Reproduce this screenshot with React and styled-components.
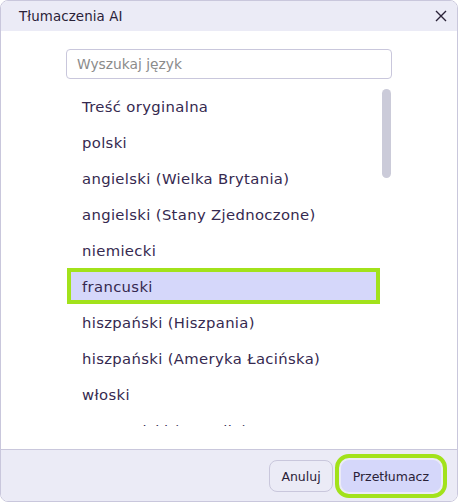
import styled, { createGlobalStyle } from "styled-components";

const GlobalStyle = createGlobalStyle`
  html, body { margin: 0; padding: 0; background: #ffffff; }
  body { font-family: "DejaVu Sans", "Open Sans", sans-serif; }
`;

const Dialog = styled.div`
  box-sizing: border-box;
  width: 458px;
  height: 502px;
  border: 1px solid #c9c7dc;
  border-radius: 8px;
  overflow: hidden;
  display: flex;
  flex-direction: column;
  background: #ffffff;
`;

const Header = styled.div`
  height: 30px;
  background: #ebebf6;
  display: flex;
  align-items: center;
  justify-content: space-between;
  padding: 0 9px 0 18px;
  flex-shrink: 0;
`;

const Title = styled.div`
  font-size: 13.4px;
  letter-spacing: 0.1px;
  color: #2a2238;
`;

const CloseButton = styled.button`
  border: 0;
  background: none;
  padding: 0;
  width: 14px;
  height: 14px;
  display: flex;
  cursor: pointer;
`;

const Body = styled.div`
  flex: 1;
  padding: 18px 65px 0 65px;
  border-bottom: 1px solid #c9c7dc;
  display: flex;
  flex-direction: column;
`;

const Search = styled.input`
  box-sizing: border-box;
  width: 326px;
  height: 30px;
  border: 1px solid #c9c7dc;
  border-radius: 4px;
  padding: 0 10px;
  font-family: inherit;
  font-size: 13.8px;
  color: #333;
  outline: none;
  &::placeholder { color: #8b8b8b; }
`;

const ListArea = styled.div`
  margin-top: 9px;
  height: 338px;
  display: flex;
  gap: 2px;
  overflow: hidden;
`;

const List = styled.ul`
  list-style: none;
  margin: 0;
  padding: 0 0 0 1px;
  width: 313px;
`;

const Item = styled.li`
  box-sizing: border-box;
  height: 36px;
  display: flex;
  align-items: center;
  padding-left: ${(p) => (p.$active ? 11 : 15)}px;
  padding-top: 1px;
  font-size: 14.8px;
  letter-spacing: 0.35px;
  color: #35294f;
  background: ${(p) => (p.$active ? "#d5d7fa" : "transparent")};
  border: ${(p) => (p.$active ? "4px solid #a2e21b" : "0")};
`;

const Scrollbar = styled.div`
  width: 9px;
  height: 89px;
  margin-top: 1px;
  border-radius: 5px;
  background: #cbcbd9;
`;

const Footer = styled.div`
  height: 51px;
  background: #ebebf6;
  display: flex;
  align-items: center;
  justify-content: flex-end;
  gap: 8px;
  padding: 0 16px 0 0;
  flex-shrink: 0;
`;

const Button = styled.button`
  box-sizing: border-box;
  height: 32px;
  padding: 0 11px;
  border-radius: 8px;
  font-family: inherit;
  font-size: 12.5px;
  color: #2a2238;
  border: 1px solid ${(p) => (p.$primary ? "#d5d7fa" : "#c9c7dc")};
  background: ${(p) => (p.$primary ? "#d5d7fa" : "#ebebf6")};
  outline: ${(p) => (p.$primary ? "4px solid #a2e21b" : "none")};
  outline-offset: 2px;
  margin-top: 1px;
`;

const languages = [
  "Treść oryginalna",
  "polski",
  "angielski (Wielka Brytania)",
  "angielski (Stany Zjednoczone)",
  "niemiecki",
  "francuski",
  "hiszpański (Hiszpania)",
  "hiszpański (Ameryka Łacińska)",
  "włoski",
  "portugalski (Brazylia)",
];

export default function App() {
  return (
    <>
      <GlobalStyle />
      <Dialog>
        <Header>
          <Title>Tłumaczenia AI</Title>
          <CloseButton aria-label="Zamknij">
            <svg width="14" height="14" viewBox="0 0 14 14">
              <path d="M2 2 L12 12 M12 2 L2 12" stroke="#2a2238" strokeWidth="1.4" fill="none" />
            </svg>
          </CloseButton>
        </Header>
        <Body>
          <Search placeholder="Wyszukaj język" />
          <ListArea>
            <List>
              {languages.map((l) => (
                <Item key={l} $active={l === "francuski"}>{l}</Item>
              ))}
            </List>
            <Scrollbar />
          </ListArea>
        </Body>
        <Footer>
          <Button>Anuluj</Button>
          <Button $primary>Przetłumacz</Button>
        </Footer>
      </Dialog>
    </>
  );
}
